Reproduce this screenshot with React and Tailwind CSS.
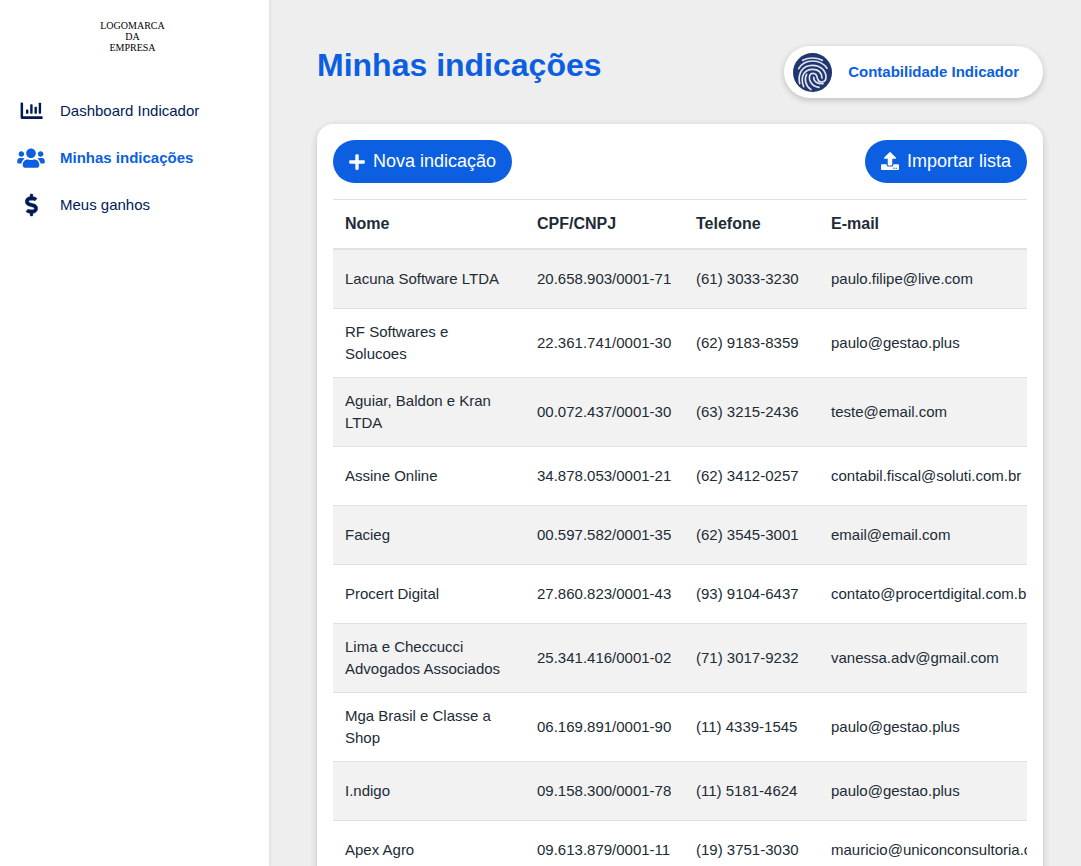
import { FaUsers, FaDollarSign, FaPlus } from "react-icons/fa";

function ChartIcon(props) {
  return (
    <svg viewBox="0 0 23 22" fill="currentColor" {...props}>
      <path d="M1.4 2.6 h0.9 q0.8 0 0.8 0.8 v12.8 h18.8 q0.8 0 0.8 0.8 v1.2 q0 0.8 -0.8 0.8 h-19.7 q-1.6 0 -1.6 -1.6 v-14 q0 -0.8 0.8 -0.8 z" />
      <rect x="6" y="9.5" width="2.4" height="4.2" rx="0.6" />
      <rect x="10.2" y="4.3" width="2.4" height="9.4" rx="0.6" />
      <rect x="14.5" y="6.8" width="2.4" height="6.9" rx="0.6" />
      <rect x="18.7" y="2.7" width="2.4" height="11" rx="0.6" />
    </svg>
  );
}

const navItems = [
  { label: "Dashboard Indicador", Icon: ChartIcon, iconClass: "h-[22px] w-[23px]", stroke: 0 },
  { label: "Minhas indicações", Icon: FaUsers, iconClass: "h-[22px] w-7", stroke: 0, active: true },
  { label: "Meus ganhos", Icon: FaDollarSign, iconClass: "h-[22px] w-[13px] overflow-visible", stroke: 10 },
];

const rows = [
  ["Lacuna Software LTDA", "20.658.903/0001-71", "(61) 3033-3230", "paulo.filipe@live.com"],
  ["RF Softwares e Solucoes", "22.361.741/0001-30", "(62) 9183-8359", "paulo@gestao.plus"],
  ["Aguiar, Baldon e Kran LTDA", "00.072.437/0001-30", "(63) 3215-2436", "teste@email.com"],
  ["Assine Online", "34.878.053/0001-21", "(62) 3412-0257", "contabil.fiscal@soluti.com.br"],
  ["Facieg", "00.597.582/0001-35", "(62) 3545-3001", "email@email.com"],
  ["Procert Digital", "27.860.823/0001-43", "(93) 9104-6437", "contato@procertdigital.com.br"],
  ["Lima e Checcucci Advogados Associados", "25.341.416/0001-02", "(71) 3017-9232", "vanessa.adv@gmail.com"],
  ["Mga Brasil e Classe a Shop", "06.169.891/0001-90", "(11) 4339-1545", "paulo@gestao.plus"],
  ["I.ndigo", "09.158.300/0001-78", "(11) 5181-4624", "paulo@gestao.plus"],
  ["Apex Agro", "09.613.879/0001-11", "(19) 3751-3030", "mauricio@uniconconsultoria.com.br"],
];

function Fingerprint() {
  return (
    <svg viewBox="0 0 117 117" className="size-[39px] shrink-0" aria-hidden="true">
      <circle cx="58.5" cy="58.5" r="58.5" fill="#21356f" />
      <g fill="none" stroke="#dfe4ee" strokeWidth="5" strokeLinecap="round">
        <path d="M29 22 Q58 8 88 22" />
        <path d="M17 47 C34 17 82 16 102 46" />
        <path d="M20 92 C14 64 26 37 58 37 C84 37 99 54 99 73 C98 90 78 91 74 78 C71 66 69 61 60 61 C51 61 47 70 50 81 C54 94 64 101 78 103" />
        <path d="M32 101 C21 74 31 49 59 49 C78 49 86 60 87 75" />
        <path d="M54 110 C37 98 33 78 41 64" />
        <path d="M62 73 C62 86 73 93 90 92" />
      </g>
    </svg>
  );
}

function UploadIcon() {
  return (
    <svg viewBox="0 0 512 569" className="h-5 w-[18px]" fill="currentColor" aria-hidden="true">
      <path d="M296 384h-80c-13.3 0-24-10.7-24-24V192h-87.7c-17.8 0-26.7-21.5-14.1-34.1L242.3 5.7c7.5-7.5 19.8-7.5 27.3 0l152.2 152.2c12.6 12.6 3.7 34.1-14.1 34.1H320v168c0 13.3-10.7 24-24 24zm216-8v112c0 13.3-10.7 24-24 24H24c-13.3 0-24-10.7-24-24V376c0-13.3 10.7-24 24-24h136v8c0 30.9 25.1 56 56 56h80c30.9 0 56-25.1 56-56v-8h136c13.3 0 24 10.7 24 24zm-124 88c0-11-9-20-20-20s-20 9-20 20 9 20 20 20 20-9 20-20zm64 0c0-11-9-20-20-20s-20 9-20 20 9 20 20 20 20-9 20-20z" />
    </svg>
  );
}

function Sidebar() {
  return (
    <aside className="w-[269px] shrink-0 bg-white shadow-[0_0_4px_rgba(0,0,0,0.12)]">
      <div className="pt-5 pr-1 text-center font-['Liberation_Serif',serif] text-[10px] leading-[11px] text-black">
        LOGOMARCA
        <br />
        DA
        <br />
        EMPRESA
      </div>
      <nav className="mt-[35px]">
        {navItems.map(({ label, Icon, iconClass, stroke, active }) => (
          <a
            key={label}
            href="#"
            aria-current={active ? "page" : undefined}
            className={
              active
                ? "flex h-[47px] items-center gap-[13px] pl-[15px] text-[15px] font-bold text-[#0b5fe0]"
                : "flex h-[47px] items-center gap-[13px] pl-[15px] text-[15px] text-[#001a57]"
            }
          >
            <span className="flex w-8 justify-center pb-px">
              <Icon className={iconClass} strokeWidth={stroke} aria-hidden="true" />
            </span>
            {label}
          </a>
        ))}
      </nav>
    </aside>
  );
}

export default function App() {
  return (
    <div className="flex h-screen overflow-hidden bg-[#eeeeee] font-['Liberation_Sans',Arial,sans-serif] text-[#212b36]">
      <Sidebar />
      <main className="min-w-0 flex-1 overflow-y-auto pt-[46px] pr-[38px] pb-12 pl-12 [scrollbar-width:none]">
        <header className="flex items-start justify-between">
          <h1 className="text-[32px] leading-[38px] font-bold text-[#0b5fe0]">Minhas indicações</h1>
          <button
            type="button"
            className="flex h-[52px] items-center gap-4 rounded-full bg-white pr-6 pl-[9px] text-[15px] font-bold text-[#0b5fe0] shadow-[0_2px_6px_rgba(0,0,0,0.2)]"
          >
            <Fingerprint />
            Contabilidade Indicador
          </button>
        </header>

        <section className="mt-[26px] rounded-2xl bg-white p-4 shadow-[0_2px_6px_rgba(0,0,0,0.2)]">
          <div className="flex justify-between">
            <button
              type="button"
              className="flex h-[43px] items-center gap-2 rounded-full bg-[#0b5fe0] px-4 text-[18px] text-white"
            >
              <FaPlus className="h-[18px] w-4" aria-hidden="true" />
              Nova indicação
            </button>
            <button
              type="button"
              className="flex h-[43px] items-center gap-2 rounded-full bg-[#0b5fe0] px-4 text-[18px] text-white"
            >
              <UploadIcon />
              Importar lista
            </button>
          </div>

          <div className="mt-4 overflow-x-auto [scrollbar-width:none]">
            <table className="w-full min-w-[760px] table-fixed border-separate border-spacing-0 text-left">
              <thead>
                <tr className="text-base leading-6">
                  <th scope="col" className="w-[192px] border-t border-b-2 border-[#dee2e6] p-3">Nome</th>
                  <th scope="col" className="w-[159px] border-t border-b-2 border-[#dee2e6] p-3">CPF/CNPJ</th>
                  <th scope="col" className="w-[135px] border-t border-b-2 border-[#dee2e6] p-3">Telefone</th>
                  <th scope="col" className="border-t border-b-2 border-[#dee2e6] p-3">E-mail</th>
                </tr>
              </thead>
              <tbody>
                {rows.map((row) => (
                  <tr key={row[0]} className="group text-[15px] leading-[22px] odd:bg-[#f2f2f2]">
                    {row.map((cell, i) => (
                      <td
                        key={i}
                        className={
                          i === 0
                            ? "h-[59px] border-t border-[#dee2e6] p-3 group-first:h-[58px] group-first:border-t-0"
                            : "h-[59px] border-t border-[#dee2e6] p-3 whitespace-nowrap group-first:h-[58px] group-first:border-t-0"
                        }
                      >
                        {cell}
                      </td>
                    ))}
                  </tr>
                ))}
              </tbody>
            </table>
          </div>
        </section>
      </main>
    </div>
  );
}
